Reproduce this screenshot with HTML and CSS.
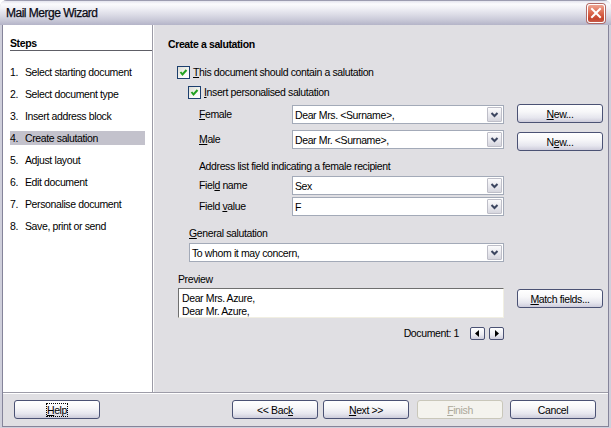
FILE: index.html
```html
<!DOCTYPE html>
<html>
<head>
<meta charset="utf-8">
<link rel="stylesheet" href="styles.css">
</head>
<body>
<div class="window">
  <div class="titlebar">
    <span class="title">Mail Merge Wizard</span>
    <span class="close"><svg width="12" height="12" viewBox="0 0 12 12"><path d="M2 2 L10 10 M10 2 L2 10" stroke="#fff" stroke-width="2" stroke-linecap="square"/></svg></span>
  </div>
  <div class="frame">
    <div class="inner">
      <div class="main">
        <div class="steps">
          <div class="steps-head">Steps</div>
          <ol class="step-list">
            <li class="step"><span class="num">1.</span><span>Select starting document</span></li>
            <li class="step"><span class="num">2.</span><span>Select document type</span></li>
            <li class="step"><span class="num">3.</span><span>Insert address block</span></li>
            <li class="step current"><span class="num">4.</span><span>Create salutation</span></li>
            <li class="step"><span class="num">5.</span><span>Adjust layout</span></li>
            <li class="step"><span class="num">6.</span><span>Edit document</span></li>
            <li class="step"><span class="num">7.</span><span>Personalise document</span></li>
            <li class="step"><span class="num">8.</span><span>Save, print or send</span></li>
          </ol>
        </div>
        <div class="content">
          <div class="heading">Create a salutation</div>

          <div class="check c1">
            <span class="cb"><svg width="11" height="11" viewBox="0 0 11 11"><path d="M2.5 5 L4.5 7.5 L8.5 3" fill="none" stroke="#21a121" stroke-width="2"/></svg></span>
            <span><u>T</u>his document should contain a salutation</span>
          </div>
          <div class="check c2">
            <span class="cb"><svg width="11" height="11" viewBox="0 0 11 11"><path d="M2.5 5 L4.5 7.5 L8.5 3" fill="none" stroke="#21a121" stroke-width="2"/></svg></span>
            <span><u>I</u>nsert personalised salutation</span>
          </div>

          <div class="frow r-female">
            <span class="flabel"><u>F</u>emale</span>
            <div class="combo w-field"><span class="txt">Dear Mrs. &lt;Surname&gt;,</span><span class="dd"><svg width="13" height="13" viewBox="0 0 13 13"><path d="M3.5 5 L6.5 8 L9.5 5" fill="none" stroke="#3c4660" stroke-width="2"/></svg></span></div>
            <div class="btn side-btn up1"><span><u>N</u>ew...</span></div>
          </div>
          <div class="frow r-male">
            <span class="flabel"><u>M</u>ale</span>
            <div class="combo w-field"><span class="txt">Dear Mr. &lt;Surname&gt;,</span><span class="dd"><svg width="13" height="13" viewBox="0 0 13 13"><path d="M3.5 5 L6.5 8 L9.5 5" fill="none" stroke="#3c4660" stroke-width="2"/></svg></span></div>
            <div class="btn side-btn down2"><span>N<u>e</u>w...</span></div>
          </div>

          <div class="sublabel">Address list field indicating a female recipient</div>
          <div class="frow r-fname">
            <span class="flabel">Fiel<u>d</u> name</span>
            <div class="combo w-field"><span class="txt">Sex</span><span class="dd"><svg width="13" height="13" viewBox="0 0 13 13"><path d="M3.5 5 L6.5 8 L9.5 5" fill="none" stroke="#3c4660" stroke-width="2"/></svg></span></div>
          </div>
          <div class="frow r-fvalue">
            <span class="flabel">Field <u>v</u>alue</span>
            <div class="combo w-field"><span class="txt">F</span><span class="dd"><svg width="13" height="13" viewBox="0 0 13 13"><path d="M3.5 5 L6.5 8 L9.5 5" fill="none" stroke="#3c4660" stroke-width="2"/></svg></span></div>
          </div>

          <div class="glabel"><u>G</u>eneral salutation</div>
          <div class="combo w-general"><span class="txt">To whom it may concern,</span><span class="dd"><svg width="13" height="13" viewBox="0 0 13 13"><path d="M3.5 5 L6.5 8 L9.5 5" fill="none" stroke="#3c4660" stroke-width="2"/></svg></span></div>

          <div class="plabel">Preview</div>
          <div class="prow">
            <div class="preview">
              <div>Dear Mrs. Azure,</div>
              <div>Dear Mr. Azure,</div>
            </div>
            <div class="btn side-btn match"><span><u>M</u>atch fields...</span></div>
          </div>

          <div class="docrow">
            <span class="doclabel">Document: 1</span>
            <span class="abtn"><svg width="13" height="11" viewBox="0 0 13 11"><path d="M8 2 L4 5.5 L8 9 Z" fill="#000"/></svg></span>
            <span class="abtn"><svg width="13" height="11" viewBox="0 0 13 11"><path d="M5 2 L9 5.5 L5 9 Z" fill="#000"/></svg></span>
          </div>
        </div>
      </div>
      <div class="footer">
        <div class="btn help"><span class="focus"><u>H</u>elp</span></div>
        <div class="btn back"><span>&lt;&lt; Bac<u>k</u></span></div>
        <div class="btn next"><span><u>N</u>ext &gt;&gt;</span></div>
        <div class="btn finish disabled"><span><u>F</u>inish</span></div>
        <div class="btn cancel"><span>Cancel</span></div>
      </div>
    </div>
  </div>
</div>
</body>
</html>
```

FILE: styles.css
```css
html, body {
  margin: 0;
  padding: 0;
  background: #ffffff;
}

body {
  font-family: "Liberation Sans", Arial, sans-serif;
  font-size: 10.5px;
  letter-spacing: -0.38px;
  color: #000;
}

u {
  text-decoration: underline;
  text-underline-offset: 1px;
}

.window {
  width: 611px;
  height: 428px;
  display: flex;
  flex-direction: column;
  background: #cfcfdb;
  border-radius: 7px 7px 0 0;
  overflow: hidden;
}

.titlebar {
  height: 25px;
  flex: none;
  box-sizing: border-box;
  display: flex;
  align-items: center;
  justify-content: space-between;
  padding: 0 6px 0 6px;
  border-top: 1px solid #9c9cb0;
  background: linear-gradient(#e4e4ee 0, #fbfbfd 3px, #f1f1f6 7px, #dedee8 13px, #c9c9d8 19px, #b4b4c8 24px);
}

.title {
  font-size: 12px;
  letter-spacing: -0.5px;
  color: #0a0a14;
  -webkit-text-stroke: 0.25px #0a0a14;
}

.close {
  width: 18px;
  height: 19px;
  box-sizing: border-box;
  border: 1px solid #ffffff;
  border-radius: 3px;
  background: linear-gradient(#eea593, #dc6a50 45%, #c6452d 80%, #c65a48);
  box-shadow: 0 0 0 1px #b06a66;
  display: flex;
  align-items: center;
  justify-content: center;
}

.frame {
  flex: 1;
  display: flex;
  padding: 0 2px 1px 2px;
}

.inner {
  flex: 1;
  display: flex;
  flex-direction: column;
  border: 1px solid #85849a;
  border-top: none;
  background: #e0dfe3;
}

.main {
  height: 367px;
  flex: none;
  display: flex;
}

/* Steps panel */
.steps {
  width: 150px;
  flex: none;
  box-sizing: border-box;
  background: #ffffff;
  border-right: 1px solid #9c9ba6;
  padding-top: 12px;
}

.steps-head {
  margin-left: 7px;
  height: 13px;
  line-height: 13px;
  font-weight: bold;
  border-bottom: 1px solid #5e5e66;
}

.step-list {
  list-style: none;
  margin: 14px 0 0 7px;
  padding: 0;
}

.step {
  width: 135px;
  height: 14px;
  line-height: 14px;
  margin-bottom: 8px;
  display: flex;
}

.step.current {
  background: #c3c2cc;
}

.num {
  width: 15px;
  flex: none;
}

/* Content panel */
.content {
  flex: 1;
  box-sizing: border-box;
  border-left: 1px solid #ffffff;
  padding: 13px 4px 0 14px;
  display: flex;
  flex-direction: column;
  align-items: flex-start;
}

.heading {
  height: 13px;
  line-height: 13px;
  font-weight: bold;
}

.check {
  display: flex;
  align-items: center;
  gap: 3px;
  height: 13px;
  line-height: 13px;
}

.check.c1 {
  margin-top: 15px;
  margin-left: 9px;
}

.check.c2 {
  margin-top: 7px;
  margin-left: 20px;
}

.cb {
  width: 13px;
  height: 13px;
  flex: none;
  box-sizing: border-box;
  border: 1px solid #1c3f6e;
  background: linear-gradient(135deg, #dcdcd4, #f6f6f3 60%, #ffffff);
  display: flex;
  align-items: center;
  justify-content: center;
}

.cb svg {
  display: block;
}

.frow {
  display: flex;
  align-items: flex-start;
}

.flabel {
  width: 93px;
  margin-left: 31px;
  height: 19px;
  line-height: 19px;
  flex: none;
}

.r-female { margin-top: 6px; }
.r-male { margin-top: 6px; }
.r-fname { margin-top: 3px; }
.r-fvalue { margin-top: 2px; }

.combo {
  box-sizing: border-box;
  height: 19px;
  border: 1px solid #a3aab8;
  background: #ffffff;
  display: flex;
  align-items: center;
  padding-left: 2px;
  flex: none;
}

.combo .txt {
  flex: 1;
  white-space: nowrap;
}

.w-field { width: 212px; }

.w-general {
  width: 315px;
  margin-left: 21px;
  margin-top: 3px;
}

.dd {
  width: 15px;
  height: 15px;
  box-sizing: border-box;
  margin-right: 1px;
  border: 1px solid #bebec8;
  border-radius: 1px;
  background: linear-gradient(#fbfbfc, #e6e6ec 60%, #d6d6de);
  display: flex;
  align-items: center;
  justify-content: center;
}

.dd svg { display: block; }

.btn {
  box-sizing: border-box;
  width: 86px;
  height: 19px;
  flex: none;
  border: 1px solid #4b5274;
  border-radius: 3px;
  background: linear-gradient(#ffffff, #f7f7f9 40%, #e6e6ee 75%, #cdccdb);
  display: flex;
  align-items: center;
  justify-content: center;
  white-space: nowrap;
}

.side-btn { margin-left: 13px; }
.up1 { margin-top: -1px; }
.down2 { margin-top: 2px; }

.sublabel {
  margin-top: 9px;
  margin-left: 31px;
  height: 13px;
  line-height: 13px;
}

.glabel {
  margin-top: 11px;
  margin-left: 21px;
  height: 13px;
  line-height: 13px;
}

.plabel {
  margin-top: 11px;
  margin-left: 10px;
  height: 13px;
  line-height: 13px;
}

.prow {
  margin-top: 2px;
  margin-left: 10px;
  display: flex;
  align-items: flex-start;
}

.preview {
  box-sizing: border-box;
  width: 326px;
  height: 30px;
  background: #ffffff;
  border-top: 1px solid #6f6f6f;
  border-left: 1px solid #6f6f6f;
  border-right: 1px solid #f1efe2;
  border-bottom: 1px solid #f1efe2;
  padding: 3px 0 0 3px;
  line-height: 13px;
}

.match { margin-top: 1px; }

.docrow {
  align-self: stretch;
  margin-top: 9px;
  margin-right: 100px;
  height: 13px;
  display: flex;
  justify-content: flex-end;
  align-items: center;
}

.doclabel {
  line-height: 13px;
  margin-right: 11px;
}

.abtn {
  box-sizing: border-box;
  width: 15px;
  height: 13px;
  border: 1px solid #4b5274;
  border-radius: 2px;
  background: linear-gradient(#ffffff, #ececf2 60%, #cfcedc);
  display: flex;
  align-items: center;
  justify-content: center;
}

.abtn + .abtn { margin-left: 4px; }
.abtn svg { display: block; }

/* Footer */
.footer {
  flex: 1;
  border-top: 1px solid #9d9ca8;
  box-shadow: inset 0 1px #ffffff;
  padding: 7px 0 0 11px;
  display: flex;
  align-items: flex-start;
}

.help .focus {
  outline: 1px dotted #000;
  outline-offset: 0;
  line-height: 12px;
}

.back { margin-left: 132px; }
.next { margin-left: 5px; }
.finish { margin-left: 8px; }
.cancel { margin-left: 7px; }

.btn.disabled {
  border-color: #c9c7ba;
  background: #f4f3ee;
  color: #aca899;
}
```
